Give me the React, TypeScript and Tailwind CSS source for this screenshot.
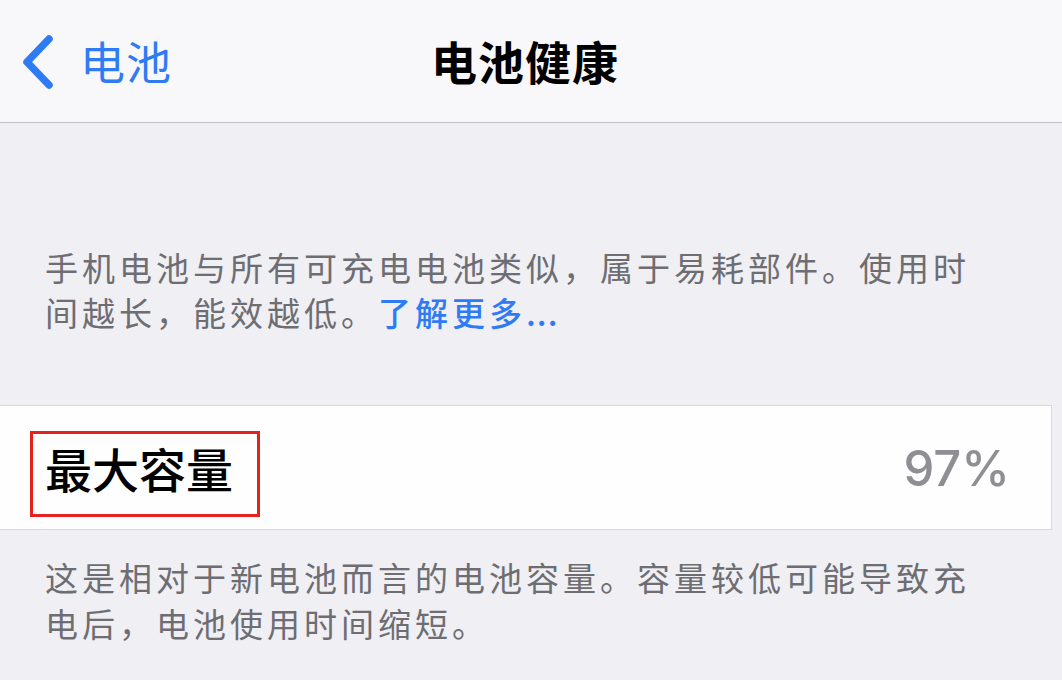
import React from "react";

const font = {
  fontFamily: '"Noto Sans CJK SC", "Noto Sans", sans-serif',
};

const BackChevron = () => (
  <svg width="40" height="60" viewBox="0 0 40 60" className="shrink-0">
    <path
      d="M30 8 L8 31 L30 54"
      fill="none"
      stroke="#2f7bf5"
      strokeWidth="7.5"
      strokeLinecap="round"
      strokeLinejoin="round"
    />
  </svg>
);

export default function App() {
  return (
    <div
      className="w-[1062px] h-[680px] overflow-hidden bg-[#efeff4] flex flex-col"
      style={font}
    >
      {/* nav bar */}
      <div className="h-[123px] shrink-0 bg-[#f8f8fa] border-b border-[#c2c2c6] grid grid-cols-3 items-center">
        <div className="flex items-center pl-[19px] gap-[21px] text-[#2f7bf5]">
          <BackChevron />
          <span className="text-[45px] leading-none tracking-[1px] pb-[2px]">电池</span>
        </div>
        <div className="flex justify-center pr-[12px]">
          <span className="text-[46px] leading-none font-semibold tracking-[1px] text-black whitespace-nowrap pb-[2px]">
            电池健康
          </span>
        </div>
        <div />
      </div>

      {/* explanation */}
      <p className="pt-[122px] px-[45px] text-[33px] leading-[45px] tracking-[4px] text-[#6d6d72] whitespace-nowrap">
        手机电池与所有可充电电池类似，属于易耗部件。使用时
        <br />
        间越长，能效越低。
        <span className="text-[#2f7bf5] font-medium">
          了解更多<span className="tracking-[1px]">...</span>
        </span>
      </p>

      {/* max capacity row */}
      <div className="mt-[70px] mr-[10px] h-[125px] shrink-0 bg-[#fefefe] border-y border-r border-[#d9d9dd] flex items-start justify-between pl-[30px] pr-[41px] pt-[25px]">
        <div className="h-[86px] border-[3px] border-[#e5221d] pt-[6px] pl-[12px] pr-[24px]">
          <span className="block text-[47px] leading-[56px] font-medium text-black whitespace-nowrap">
            最大容量
          </span>
        </div>
        <span
          className="mt-[13px] text-[49px] leading-none font-medium text-[#8e8e93]"
          style={{ fontFamily: 'Inter, "Liberation Sans", sans-serif' }}
        >
          97%
        </span>
      </div>

      {/* footer note */}
      <p className="mt-[24px] px-[45px] text-[33px] leading-[46px] tracking-[4px] text-[#6d6d72] whitespace-nowrap">
        这是相对于新电池而言的电池容量。容量较低可能导致充
        <br />
        电后，电池使用时间缩短。
      </p>
    </div>
  );
}
